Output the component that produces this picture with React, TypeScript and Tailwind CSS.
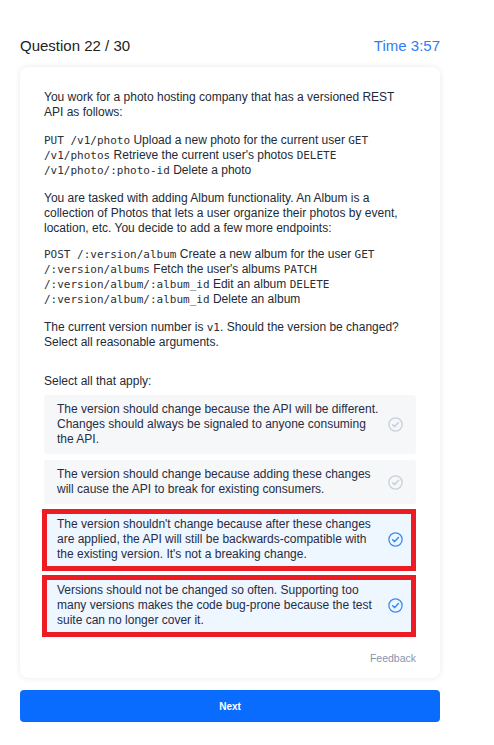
import { ReactNode } from "react";

function Code({ children }: { children: ReactNode }) {
  return (
    <code className="font-['DejaVu_Sans_Mono',monospace] text-[11px] text-[#2b2f36]">
      {children}
    </code>
  );
}

function CheckCircle({ active }: { active: boolean }) {
  const color = active ? "#3d8bf2" : "#c9cfd9";
  return (
    <svg width="15" height="15" viewBox="0 0 15 15" className="shrink-0">
      <circle cx="7.5" cy="7.5" r="6.6" fill="none" stroke={color} strokeWidth="1.3" />
      <path
        d="M4.6 7.7 L6.7 9.6 L10.4 5.6"
        fill="none"
        stroke={color}
        strokeWidth="1.5"
        strokeLinecap="round"
        strokeLinejoin="round"
      />
    </svg>
  );
}

const options = [
  {
    text: "The version should change because the API will be different. Changes should always be signaled to anyone consuming the API.",
    selected: false,
    mt: "mt-[6px]",
  },
  {
    text: "The version should change because adding these changes will cause the API to break for existing consumers.",
    selected: false,
    mt: "mt-[6px]",
  },
  {
    text: "The version shouldn't change because after these changes are applied, the API will still be backwards-compatible with the existing version. It's not a breaking change.",
    selected: true,
    mt: "mt-[5px]",
  },
  {
    text: "Versions should not be changed so often. Supporting too many versions makes the code bug-prone because the test suite can no longer cover it.",
    selected: true,
    mt: "mt-[4px]",
  },
];

export default function App() {
  return (
    <div className="min-h-screen bg-white font-['Liberation_Sans',Arial,sans-serif]">
      <div className="w-[420px] ml-5 pt-[37px] pb-6">
        {/* Header */}
        <div className="flex items-center justify-between text-[15px] leading-[18px]">
          <span className="text-[#222]">Question 22 / 30</span>
          <span className="text-[#2f7df6]">Time 3:57</span>
        </div>

        {/* Card */}
        <div className="mt-3 rounded-lg bg-white shadow-[0_0_6px_rgba(0,0,0,0.09)] px-6 pt-[23px] pb-[13px] text-[12px] leading-[15px] text-[#232a36]">
          <p>You work for a photo hosting company that has a versioned REST API as follows:</p>
          <p className="mt-[13px]">
            <Code>PUT /v1/photo</Code> Upload a new photo for the current user <Code>GET /v1/photos</Code> Retrieve
            the current user's photos <Code>DELETE /v1/photo/:photo-id</Code> Delete a photo
          </p>
          <p className="mt-[13px]">
            You are tasked with adding Album functionality. An Album is a collection of Photos that lets a user
            organize their photos by event, location, etc. You decide to add a few more endpoints:
          </p>
          <p className="mt-[11px]">
            <Code>POST /:version/album</Code> Create a new album for the user <Code>GET /:version/albums</Code> Fetch
            the user's albums <Code>PATCH /:version/album/:album_id</Code> Edit an album{" "}
            <Code>DELETE /:version/album/:album_id</Code> Delete an album
          </p>
          <p className="mt-[13px]">
            The current version number is <Code>v1</Code>. Should the version be changed? Select all reasonable
            arguments.
          </p>

          <p className="mt-[24px]">Select all that apply:</p>

          <div className="flex flex-col">
            {options.map((o, i) =>
              o.selected ? (
                <div
                  key={i}
                  className={`${o.mt} -ml-[2px] flex items-center gap-[6px] border-[5px] border-[#ed1c24] bg-[#eef6ff] pl-[10px] pr-[8px] pt-[3px] pb-[4px] text-[#262c44]`}
                >
                  <span className="flex-1">{o.text}</span>
                  <CheckCircle active />
                </div>
              ) : (
                <div
                  key={i}
                  className={`${o.mt} flex items-center gap-[6px] rounded-[3px] bg-[#f6f7f9] pl-[13px] pr-[13px] py-[7px] text-[#262c44]`}
                >
                  <span className="flex-1">{o.text}</span>
                  <CheckCircle active={false} />
                </div>
              )
            )}
          </div>

          <div className="mt-[15px] text-right text-[10.5px] leading-[13px] text-[#8796b0]">Feedback</div>
        </div>

        {/* Next button */}
        <button className="mt-3 h-8 w-full rounded-[4px] bg-[#0a6cff] text-[10px] font-bold text-white">
          Next
        </button>
      </div>
    </div>
  );
}
